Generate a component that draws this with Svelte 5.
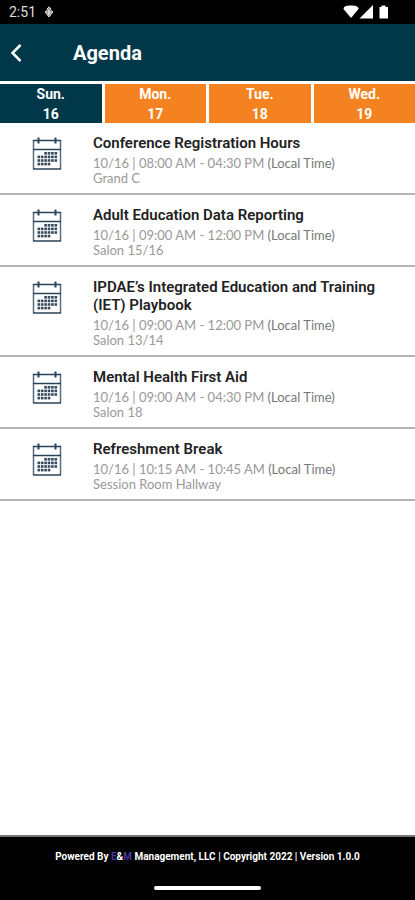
<script lang="ts">
	type Session = {
		title: string;
		time: string;
		room: string;
	};

	const days = [
		{ name: 'Sun.', date: 16 },
		{ name: 'Mon.', date: 17 },
		{ name: 'Tue.', date: 18 },
		{ name: 'Wed.', date: 19 }
	];

	const sessions: Session[] = [
		{ title: 'Conference Registration Hours', time: '10/16 | 08:00 AM - 04:30 PM', room: 'Grand C' },
		{ title: 'Adult Education Data Reporting', time: '10/16 | 09:00 AM - 12:00 PM', room: 'Salon 15/16' },
		{
			title: 'IPDAE’s Integrated Education and Training (IET) Playbook',
			time: '10/16 | 09:00 AM - 12:00 PM',
			room: 'Salon 13/14'
		},
		{ title: 'Mental Health First Aid', time: '10/16 | 09:00 AM - 04:30 PM', room: 'Salon 18' },
		{ title: 'Refreshment Break', time: '10/16 | 10:15 AM - 10:45 AM', room: 'Session Room Hallway' }
	];

	// Small squares of the calendar icon, the first and last rows are partial
	const cells: { x: number; y: number }[] = [];
	for (let row = 0; row < 4; row++) {
		for (let col = 0; col < 6; col++) {
			if (row === 0 && col < 2) continue;
			if (row === 3 && col > 3) continue;
			cells.push({ x: 5.5 + col * 3.4, y: 15 + row * 3.6 });
		}
	}

	let selected = $state(16);
</script>

<div class="app">
	<div class="status-bar">
		<span class="clock">2:51</span>
		<svg class="status-app" viewBox="0 0 10 12" width="10" height="12" aria-hidden="true">
			<path d="M5 0.8 7 3 5 5.4 3 3Z M1 6l4 5 4-5-2-1.4L5 7 3 4.6Z" fill="#999" stroke="#ddd" />
			<path d="M5 4v5" stroke="#fff" />
		</svg>
		<svg class="status-icons" viewBox="0 0 46 14" width="46" height="14" aria-hidden="true">
			<path d="M0.500 4C0.500 1 4 0.500 8 0.500S15.500 1 15.500 4L8 13Z" />
			<path d="M16.500 13.500H30V0Z" />
			<path d="M36.500 2h2V0.500h4V2h2.500v11.500H36.500Z" />
		</svg>
	</div>

	<header>
		<button class="back" aria-label="Back">
			<svg viewBox="0 0 12 18" width="12" height="18">
				<path d="M10.500 1 2.500 9l8 8" fill="none" stroke="#fff" stroke-width="2.500" />
			</svg>
		</button>
		<h1>Agenda</h1>
	</header>

	<nav class="days">
		{#each days as day}
			<button class="day" class:active={selected === day.date} onclick={() => (selected = day.date)}>
				<span>{day.name}</span>
				<span>{day.date}</span>
			</button>
		{/each}
	</nav>

	<main>
		<ul>
			{#each sessions as session}
				<li>
					<svg class="calendar" viewBox="0 0 30 34" width="30" height="34" aria-hidden="true">
						<path d="M1.500 3V32M28.500 3V32" stroke="#596c7b" stroke-width="1.500" />
						<path d="M1 3.500H29M1 12.500H29M1 32H29" stroke="#29435a" stroke-width="1.700" />
						<path d="M6.500 0.500V6.500M23.500 0.500V6.500" stroke="#29435a" stroke-width="2" />
						{#each cells as cell}
							<rect x={cell.x} y={cell.y} width="2.600" height="2.600" fill="#34495c" />
						{/each}
					</svg>
					<div class="session">
						<h2>{session.title}</h2>
						<p>{session.time} <span class="zone">(Local Time)</span></p>
						<p>{session.room}</p>
					</div>
				</li>
			{/each}
		</ul>
	</main>

	<footer>
		<p>
			Powered By <a href="#company"><span class="brand">E</span>&amp;<span class="brand">M</span></a> Management,
			LLC | Copyright 2022 | Version 1.0.0
		</p>
		<div class="home-bar"></div>
	</footer>
</div>

<style>
	:global(body) {
		margin: 0;
		background: #fff;
	}

	.app {
		display: flex;
		flex-direction: column;
		min-height: 100vh;
		font-family: Roboto, sans-serif;
		background: #fff;
	}

	button {
		border: none;
		padding: 0;
		font-family: inherit;
		color: #fff;
		cursor: pointer;
	}

	/* Phone status bar */
	.status-bar {
		display: flex;
		align-items: center;
		height: 24px;
		padding: 0 26px 0 9px;
		background: #000;
		color: #ddd;
	}

	.clock {
		font-size: 14px;
		line-height: 24px;
	}

	.status-app {
		margin-left: 8px;
	}

	.status-icons {
		margin-left: auto;
		fill: #fff;
	}

	/* Title bar */
	header {
		display: flex;
		align-items: center;
		height: 57px;
		padding: 0 10px;
		background: #003849;
		border-bottom: 3px solid #fff;
	}

	.back {
		display: flex;
		width: 63px;
		padding: 4px 0;
		background: none;
	}

	h1 {
		margin: 0;
		font-size: 20px;
		font-weight: 700;
		line-height: 24px;
		color: #fff;
	}

	/* Day tabs */
	.days {
		display: grid;
		grid-template-columns: repeat(4, 1fr);
		gap: 3px;
	}

	.day {
		display: flex;
		flex-direction: column;
		align-items: center;
		height: 39px;
		background: #f58220;
		font-size: 14px;
		font-weight: 700;
		line-height: 20px;
	}

	.day.active {
		background: #003849;
	}

	/* Session list */
	main {
		flex: 1;
	}

	ul {
		margin: 0;
		padding: 0;
		list-style: none;
	}

	li {
		display: flex;
		align-items: flex-start;
		padding: 11px 24px 7px 32px;
		border-bottom: 2px solid #b4b4b4;
	}

	.calendar {
		flex: none;
		margin: 3px 31px 0 0;
	}

	h2 {
		margin: 0 0 4px;
		font-size: 15px;
		font-weight: 600;
		line-height: 18px;
		color: #222;
	}

	.session p {
		margin: 0;
		font-family: Lato, sans-serif;
		font-size: 13px;
		line-height: 15px;
		color: #999;
	}

	.session .zone {
		color: #777;
	}

	footer {
		display: flex;
		flex-direction: column;
		align-items: center;
		padding-top: 13px;
		padding-bottom: 10px;
		border-top: 2px solid #777;
		background: #000;
	}

	footer p {
		margin: 0 0 22px;
		font-size: 10px;
		font-weight: 700;
		line-height: 14px;
		color: #fff;
	}

	footer a {
		color: inherit;
		text-decoration: none;
	}

	.brand {
		color: #4638a0;
	}

	.home-bar {
		width: 26%;
		height: 4px;
		border-radius: 2px;
		background: #fff;
	}
</style>
